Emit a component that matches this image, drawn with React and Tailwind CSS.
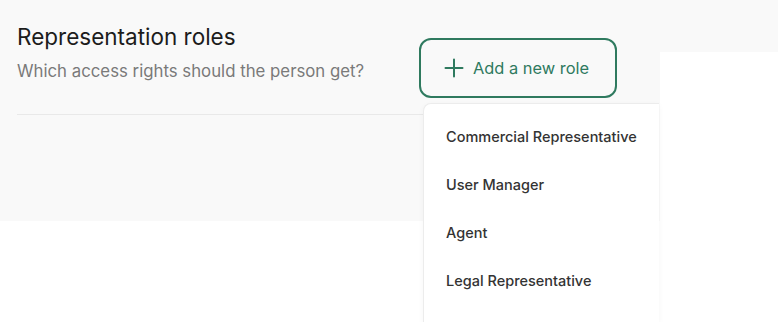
import React from 'react';

const roles = ['Commercial Representative', 'User Manager', 'Agent', 'Legal Representative'];

const PlusIcon = () => (
  <svg width="20" height="20" viewBox="0 0 20 20" fill="none" stroke="currentColor" strokeWidth="2" strokeLinecap="round">
    <path d="M10 1.5v17M1.5 10h17" />
  </svg>
);

export default function App() {
  return (
    <div className="relative h-[322px] w-full overflow-hidden bg-white" style={{ fontFamily: 'Inter, "Noto Sans", sans-serif' }}>
      {/* gray section */}
      <section className="h-[221px] bg-[#f9f9f9] pl-[17px] pt-[22px]">
        <div className="flex items-start">
          <div className="w-[402px]">
            <h2 className="text-[22.5px] leading-[30px] text-[#1c1c1c]">Representation roles</h2>
            <p className="mt-[8px] text-[16.8px] leading-[22px] text-[#7a7a7a]">Which access rights should the person get?</p>
          </div>
          <button className="mt-[16px] flex h-[60px] w-[198px] items-center gap-[9px] rounded-[12px] border-2 border-[#2f7a5f] pl-[23px] text-[16.4px] text-[#2f7a5f]">
            <PlusIcon />
            <span>Add a new role</span>
          </button>
        </div>
        <div className="mt-[16px] h-px w-[406px] bg-[#e9e9e9]" />
      </section>

      {/* right white panel */}
      <div className="absolute left-[660px] right-0 top-[52px] bottom-0 bg-white" />

      {/* dropdown menu */}
      <div className="absolute left-[423px] top-[103px] bottom-0 w-[236px] rounded-tl-[8px] border-l border-t border-[#ececec] bg-white pt-[9px] shadow-[0_2px_6px_rgba(0,0,0,0.04)]">
        {roles.map((r) => (
          <div key={r} className="flex h-[48px] items-center pl-[22px] text-[14.5px] font-medium text-[#333]">
            {r}
          </div>
        ))}
      </div>
    </div>
  );
}
